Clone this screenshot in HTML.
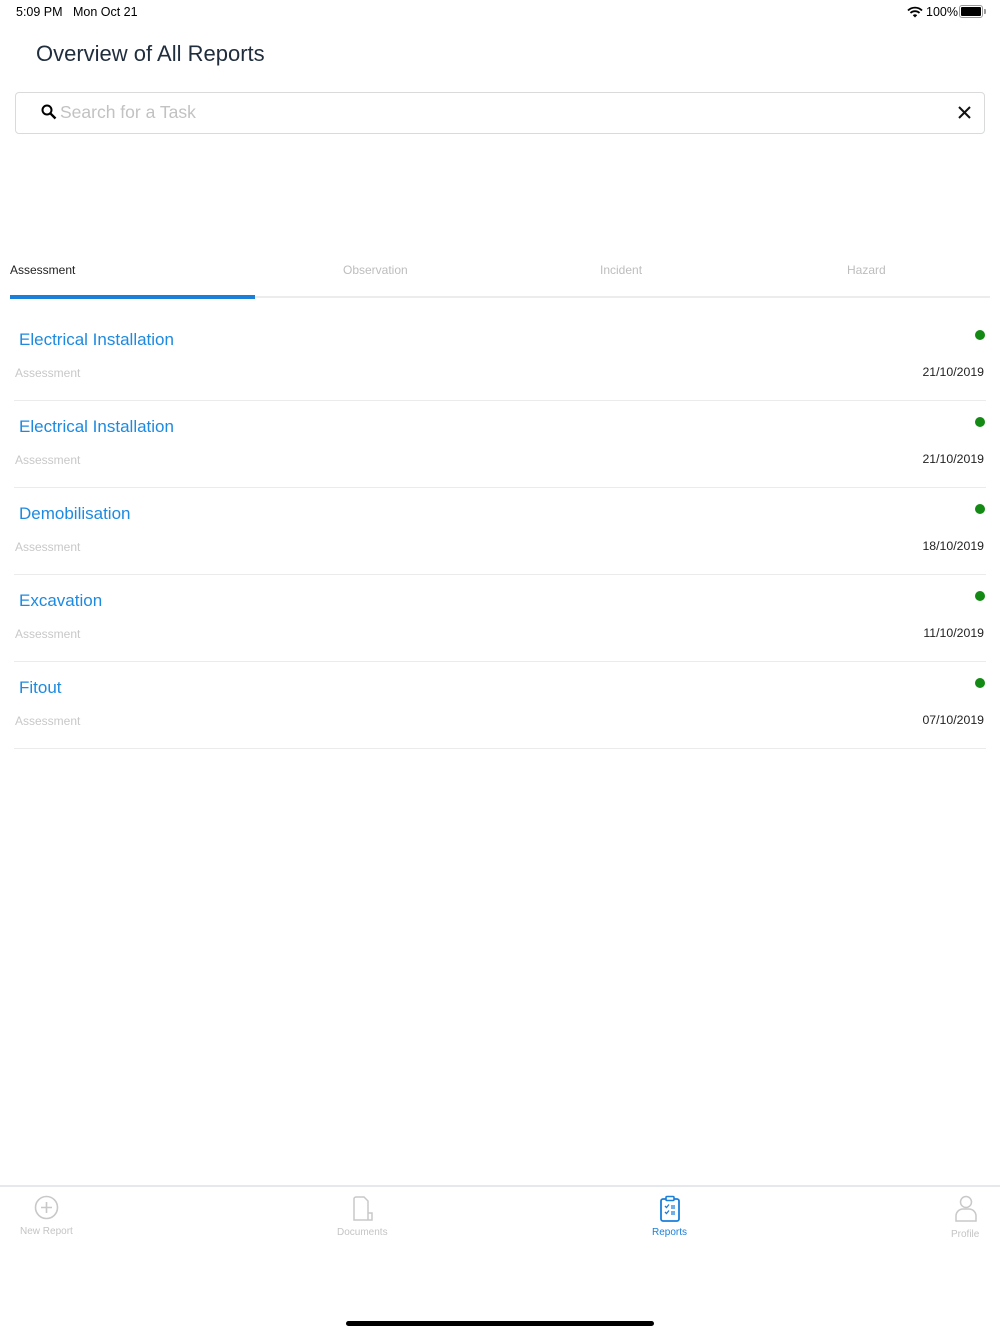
<!DOCTYPE html>
<html><head><meta charset="utf-8"><style>
*{margin:0;padding:0;box-sizing:border-box}
body{width:1000px;height:1334px;background:#fff;position:relative;overflow:hidden;font-family:"Liberation Sans","DejaVu Sans",sans-serif}
.a{position:absolute;white-space:nowrap}
.title{font-size:17px;color:#1d8ae0;left:19px}
.sub{font-size:12px;color:#c8c8c8;left:15px}
.date{font-size:12.3px;color:#222;right:16px}
.dot{width:10px;height:10px;border-radius:50%;background:#138a13;right:15px}
.sep{left:14px;right:14px;height:1px;background:#ebebeb}
.tab{font-size:12px;color:#bdbdbd;top:263px}
.nav{font-size:10px;color:#c4c4c4}
</style></head><body>
<div class="a" style="left:16px;top:5px;font-size:12.5px;color:#000">5:09 PM&nbsp;&nbsp; Mon Oct 21</div>
<svg class="a" style="left:907px;top:6px" width="16" height="12" viewBox="0 0 16 12"><path d="M1 4.5a10 10 0 0 1 14 0M3.5 7a6.5 6.5 0 0 1 9 0" stroke="#000" stroke-width="1.8" fill="none"/><path d="M8 11.5l-2.2-2.3a3 3 0 0 1 4.4 0z" fill="#000"/></svg>
<div class="a" style="left:926px;top:5px;font-size:12.5px;color:#000">100%</div>
<div class="a" style="left:959px;top:5px;width:24px;height:13px;border:1px solid #999;border-radius:3px;padding:1px"><div style="width:100%;height:100%;background:#000;border-radius:1px"></div></div>
<div class="a" style="left:984px;top:9px;width:2px;height:5px;background:#999;border-radius:0 1px 1px 0"></div>

<div class="a" style="left:36px;top:41px;font-size:22px;color:#1f2d3d">Overview of All Reports</div>

<div class="a" style="left:15px;top:92px;width:970px;height:42px;border:1px solid #d8dadc;border-radius:4px"></div>
<svg class="a" style="left:41px;top:104px" width="16" height="16" viewBox="0 0 16 16"><circle cx="6" cy="6" r="4.5" stroke="#000" stroke-width="2" fill="none"/><path d="M9.3 9.3L14.5 14.5" stroke="#000" stroke-width="2.4"/></svg>
<div class="a" style="left:60px;top:102px;font-size:17.5px;color:#c2c2c2">Search for a Task</div>
<svg class="a" style="left:958px;top:106px" width="13" height="13" viewBox="0 0 13 13"><path d="M1 1L12 12M12 1L1 12" stroke="#111" stroke-width="2"/></svg>

<div class="a tab" style="left:10px;color:#222">Assessment</div>
<div class="a tab" style="left:343px">Observation</div>
<div class="a tab" style="left:600px">Incident</div>
<div class="a tab" style="left:847px">Hazard</div>
<div class="a" style="left:10px;top:296px;width:980px;height:2px;background:#ececec"></div>
<div class="a" style="left:10px;top:295px;width:245px;height:4px;background:#1a7fd9"></div>

<div class="a title" style="top:330px">Electrical Installation</div><div class="a dot" style="top:330px"></div><div class="a sub" style="top:366px">Assessment</div><div class="a date" style="top:365px">21/10/2019</div><div class="a sep" style="top:400px"></div>
<div class="a title" style="top:417px">Electrical Installation</div><div class="a dot" style="top:417px"></div><div class="a sub" style="top:453px">Assessment</div><div class="a date" style="top:452px">21/10/2019</div><div class="a sep" style="top:487px"></div>
<div class="a title" style="top:504px">Demobilisation</div><div class="a dot" style="top:504px"></div><div class="a sub" style="top:540px">Assessment</div><div class="a date" style="top:539px">18/10/2019</div><div class="a sep" style="top:574px"></div>
<div class="a title" style="top:591px">Excavation</div><div class="a dot" style="top:591px"></div><div class="a sub" style="top:627px">Assessment</div><div class="a date" style="top:626px">11/10/2019</div><div class="a sep" style="top:661px"></div>
<div class="a title" style="top:678px">Fitout</div><div class="a dot" style="top:678px"></div><div class="a sub" style="top:714px">Assessment</div><div class="a date" style="top:713px">07/10/2019</div><div class="a sep" style="top:748px"></div>

<div class="a" style="left:0;top:1185px;width:1000px;height:2px;background:#e6e9ec"></div>
<svg class="a" style="left:34px;top:1195px" width="25" height="25" viewBox="0 0 25 25"><circle cx="12.5" cy="12.5" r="11" stroke="#c8c8c8" stroke-width="1.6" fill="none"/><path d="M12.5 7v11M7 12.5h11" stroke="#c8c8c8" stroke-width="1.6"/></svg>
<div class="a nav" style="left:20px;top:1226px">New Report</div>
<svg class="a" style="left:351px;top:1196px" width="24" height="27" viewBox="0 0 24 27"><path d="M5 1h8l4 4v19H3V3a2 2 0 0 1 2-2zM17 17h4v7h-4" stroke="#c8c8c8" stroke-width="1.5" fill="none"/></svg>
<div class="a nav" style="left:337px;top:1227px">Documents</div>
<svg class="a" style="left:659px;top:1195px" width="22" height="28" viewBox="0 0 22 28"><rect x="2" y="4" width="18" height="22" rx="2" stroke="#1a7fd9" stroke-width="1.8" fill="none"/><rect x="7" y="1.5" width="8" height="4" rx="1" stroke="#1a7fd9" stroke-width="1.6" fill="#fff"/><path d="M6 11l1.5 1.5 2.5-3M6 17l1.5 1.5 2.5-3M12 11h4M12 13h4M12 17h4M12 19h4" stroke="#1a7fd9" stroke-width="1.3" fill="none"/></svg>
<div class="a nav" style="left:652px;top:1227px;color:#1a7fd9">Reports</div>
<svg class="a" style="left:954px;top:1195px" width="24" height="28" viewBox="0 0 24 28"><circle cx="12" cy="7" r="5.5" stroke="#c8c8c8" stroke-width="1.5" fill="none"/><path d="M2 26v-5a7 7 0 0 1 7-7h6a7 7 0 0 1 7 7v5z" stroke="#c8c8c8" stroke-width="1.5" fill="none"/></svg>
<div class="a nav" style="left:951px;top:1229px">Profile</div>

<div class="a" style="left:346px;top:1321px;width:308px;height:5px;background:#000;border-radius:3px"></div>
</body></html>
